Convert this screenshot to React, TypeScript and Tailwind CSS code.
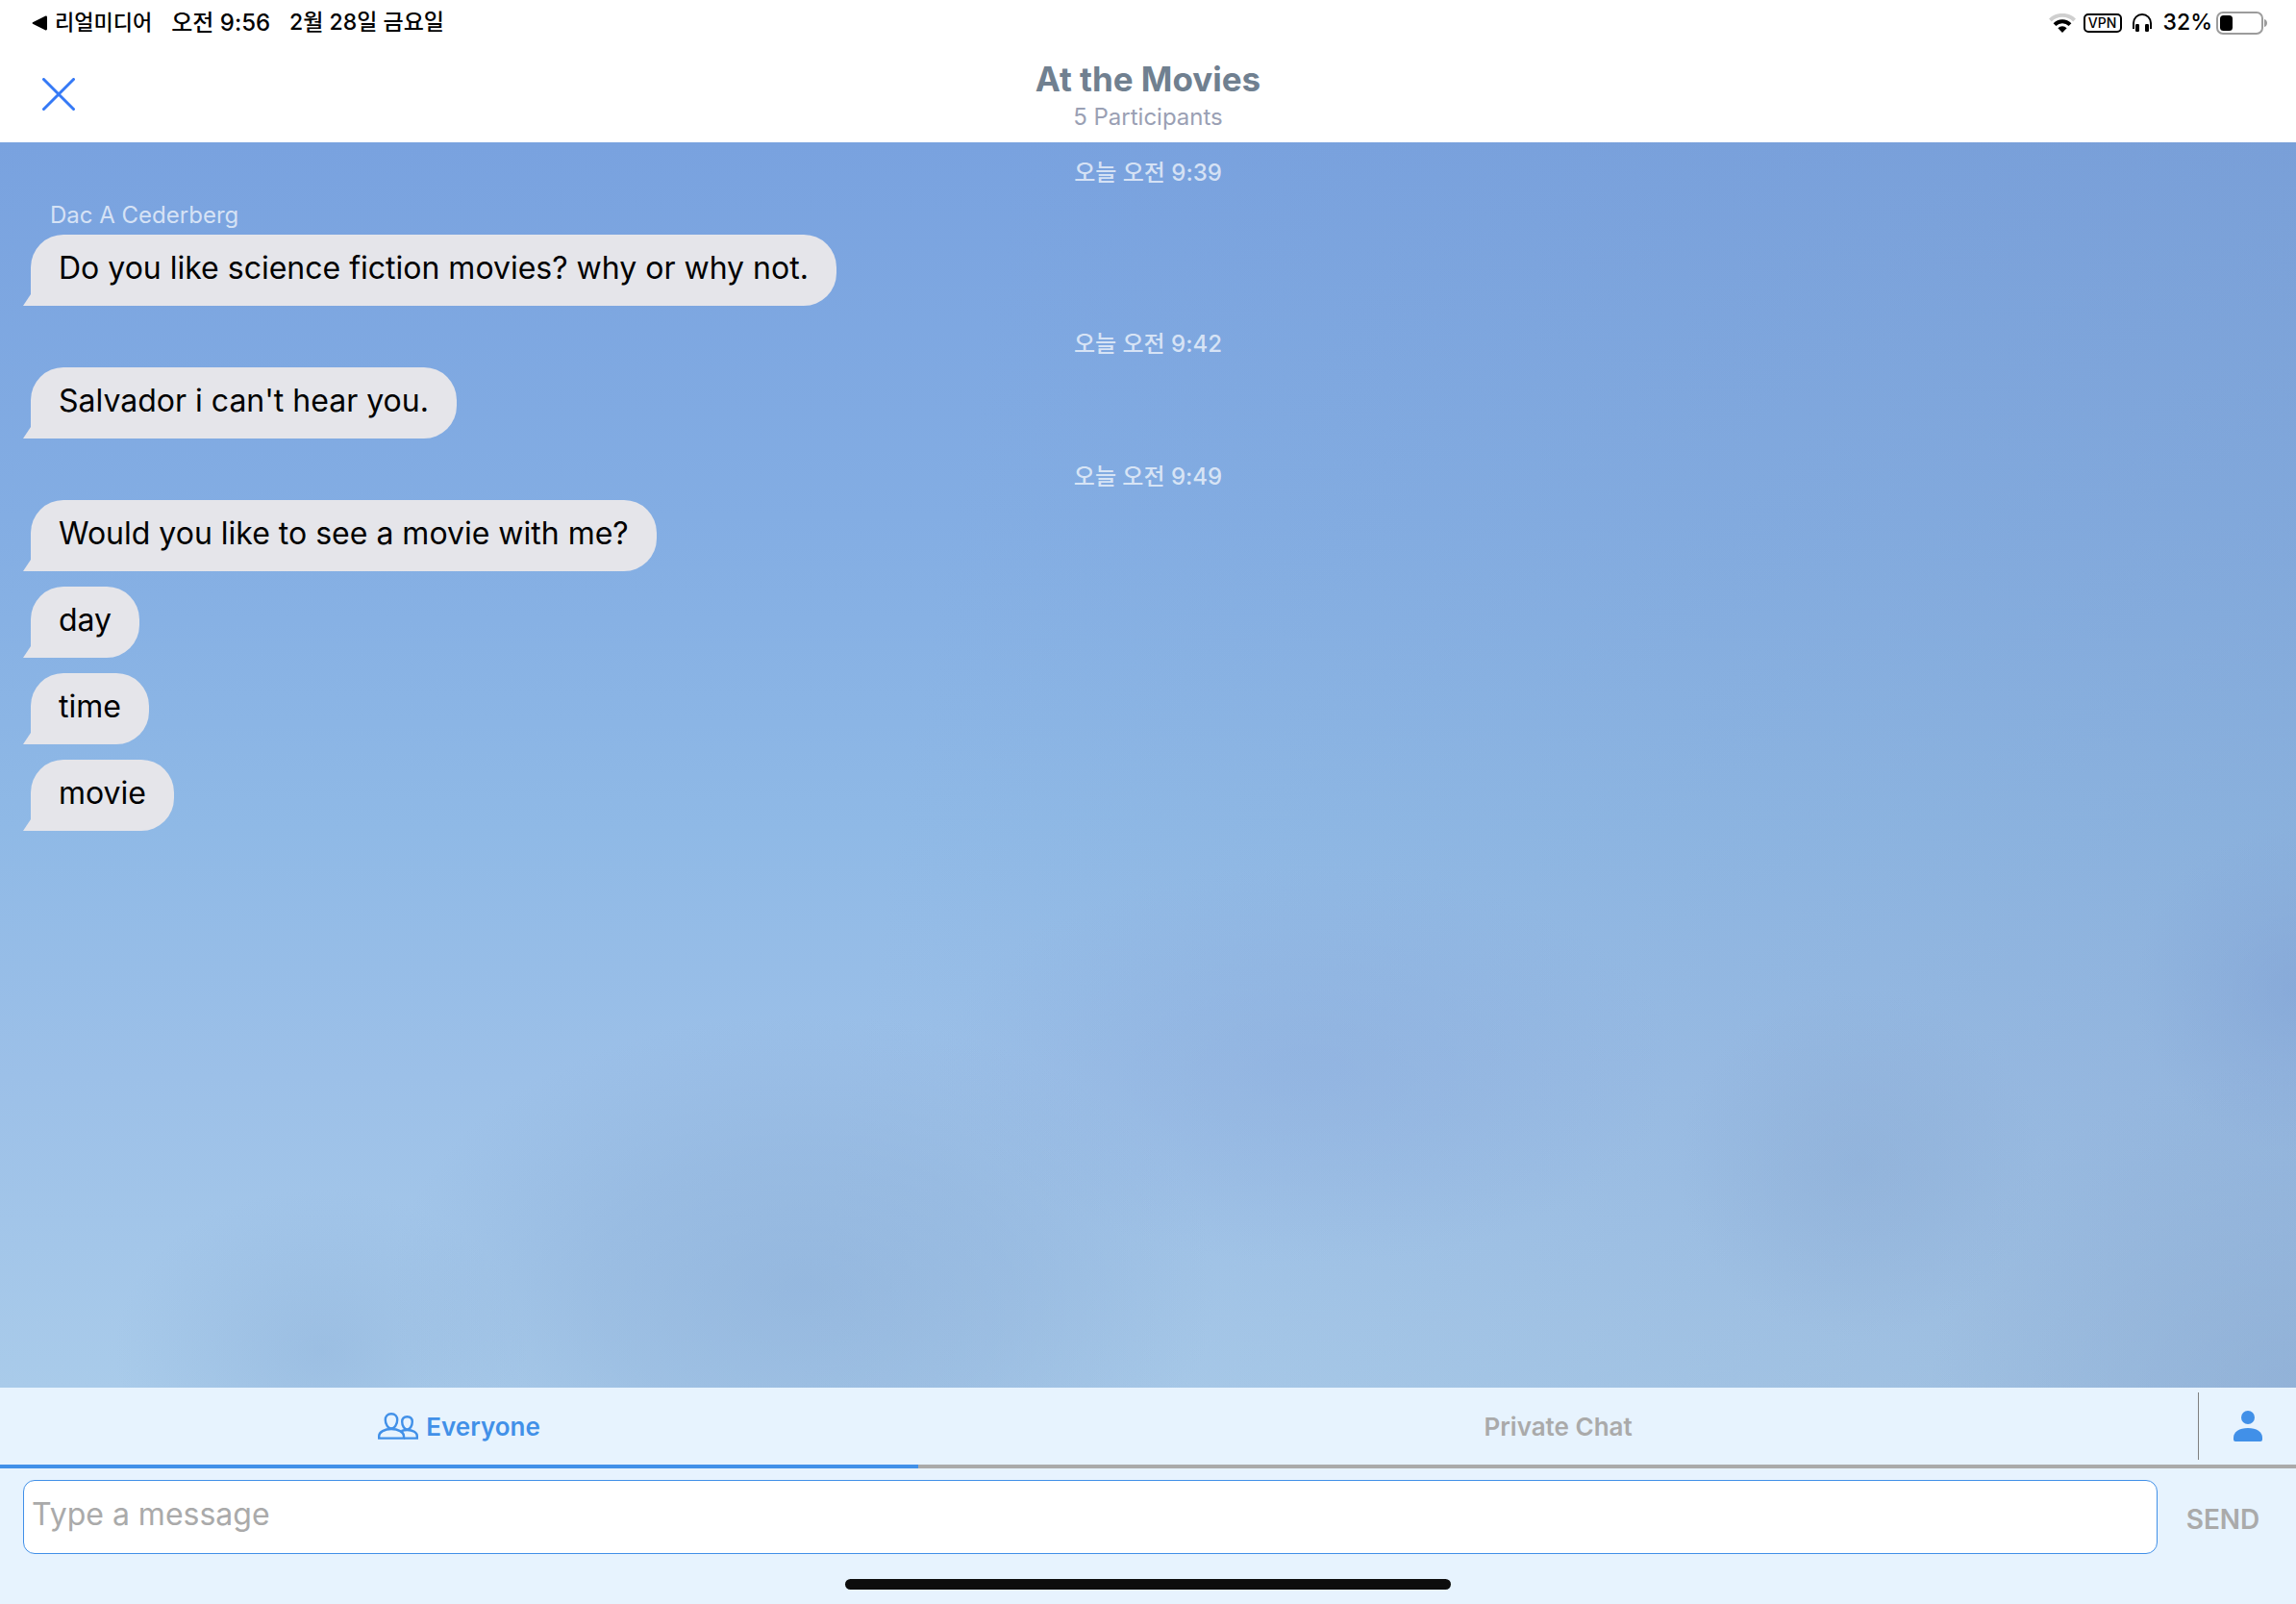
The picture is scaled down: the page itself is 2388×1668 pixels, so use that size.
import clsx from "clsx";

interface Message {
    text: string
    time?: string
    sender?: string
}

const messages: Message[] = [
    { time: "오늘 오전 9:39", sender: "Dac A Cederberg", text: "Do you like science fiction movies? why or why not." },
    { time: "오늘 오전 9:42", text: "Salvador i can't hear you." },
    { time: "오늘 오전 9:49", text: "Would you like to see a movie with me?" },
    { text: "day" },
    { text: "time" },
    { text: "movie" },
]

function WifiIcon() {
    return (
        <svg width="28" height="20" viewBox="0 0 28 20" aria-hidden="true">
            <path d="M0 5.600a20 20 0 0 1 28 0l-2.800 2.800a16 16 0 0 0-22.400 0z" fill="#cfcfcf" />
            <path d="M4.600 10.200a13.400 13.400 0 0 1 18.800 0L20.600 13a9.400 9.400 0 0 0-13.200 0z" fill="#000" />
            <path d="M14 20l-4.600-4.800a6.600 6.600 0 0 1 9.200 0z" fill="#000" />
        </svg>
    )
}

function HeadphonesIcon() {
    return (
        <svg width="20" height="20" viewBox="0 0 20 20" fill="none" aria-hidden="true">
            <path d="M1 16V10a9 9 0 0 1 18 0v6" stroke="#000" strokeWidth="2" />
            <rect x="3" y="11" width="4" height="8" rx="1.200" fill="#000" />
            <rect x="13" y="11" width="4" height="8" rx="1.200" fill="#000" />
        </svg>
    )
}

function BatteryIcon() {
    return (
        <svg width="54" height="24" viewBox="0 0 54 24" fill="none" aria-hidden="true">
            <rect x="1" y="1" width="47" height="22" rx="6" stroke="#9c9c9c" strokeWidth="2" />
            <rect x="4" y="4" width="13" height="16" rx="3.500" fill="#000" />
            <path d="M50 8c4 1 4 7 0 8z" fill="#9c9c9c" />
        </svg>
    )
}

function PeopleIcon() {
    return (
        <svg width="42" height="28" viewBox="0 0 42 28" fill="none" stroke="#4190e8" strokeWidth="2.400" aria-hidden="true">
            <path d="M14 1.200c4 0 6.200 2.800 6.200 6.300 0 4.500-2.700 9-6.200 9s-6.200-4.500-6.200-9c0-3.500 2.200-6.300 6.200-6.300z" />
            <path d="M1.200 26.600v-2.400c0-4 5.800-7.200 12.800-7.200s13 3.200 13 7.200v2.400z" />
            <path d="M30.500 4.200c3.500 0 5.300 2.300 5.300 5.300 0 4-2.300 8-5.300 8s-5.300-4-5.300-8c0-3 1.800-5.300 5.300-5.300z" />
            <path d="M24.500 19.200c1.800-.8 3.800-1.200 6-1.200 5.800 0 10.300 2.800 10.300 6.200v2.400H27" />
        </svg>
    )
}

function StatusBar() {
    return (
        <div className="flex h-12 items-center justify-between pr-[29px] pb-px pl-[33px] text-[23px] font-medium text-black">
            <div className="flex items-center gap-5 text-[24px]">
                <a href="#back" className="flex items-center gap-2 text-[22px]">
                    <svg width="16" height="16" viewBox="0 0 16 16" aria-hidden="true">
                        <path d="M1 7.200 14 .7q2-.7 2 1.300v12q0 2-2 1.300L1 8.800q-1-.8 0-1.600z" />
                    </svg>
                    리얼미디어
                </a>
                <span>오전 9:56</span>
                <span className="text-[23px]">2월 28일 금요일</span>
            </div>
            <div className="flex items-center">
                <WifiIcon />
                <span className="ml-2 flex h-5 w-10 items-center justify-center rounded-[5px] border-2 border-black text-[14px]">VPN</span>
                <span className="ml-[11px]"><HeadphonesIcon /></span>
                <span className="mr-1 ml-3">32%</span>
                <BatteryIcon />
            </div>
        </div>
    )
}

function Header() {
    return (
        <header className="grid h-[100px] grid-cols-[1fr_auto_1fr] items-center">
            <button aria-label="Close" className="ml-[44px] w-fit">
                <svg width="34" height="34" viewBox="0 0 34 34" stroke="#3579f6" strokeWidth="3" strokeLinecap="round">
                    <path d="M1.500 1.500l31 31M32.500 1.500l-31 31" />
                </svg>
            </button>
            <div className="pt-1 text-center">
                <h1 className="text-[35px] leading-[44px] font-bold text-[#708090]">At the Movies</h1>
                <p className="text-[24px] leading-9 text-[#9aa0b4]">5 Participants</p>
            </div>
        </header>
    )
}

function Bubble({ text }: { text: string }) {
    return (
        <div className="flex items-end">
            <svg width="8" height="12" viewBox="0 0 8 12" fill="#e5e5ea" aria-hidden="true">
                <path d="M8 0v12H0z" />
            </svg>
            <p className="rounded-[34px] rounded-bl-none bg-[#e5e5ea] px-[29px] pt-[13px] pb-[17px] text-[32px] leading-[44px] text-black">
                {text}
            </p>
        </div>
    )
}

function MessageList() {
    return (
        <main className="flex-1 bg-[radial-gradient(ellipse_16%_16%_at_57%_74%,#86a6da55,#86a6da33_45%,transparent),radial-gradient(ellipse_8%_14%_at_81%_82%,#86a6d055,#86a6d033_45%,transparent),radial-gradient(ellipse_7%_13%_at_100%_68%,#7c9cd266,#7c9cd233_45%,transparent),radial-gradient(ellipse_18%_22%_at_35%_92%,#88abd688,#88abd655_50%,transparent),radial-gradient(ellipse_9%_13%_at_14%_97%,#8aaed866,#8aaed833_50%,transparent),radial-gradient(ellipse_16%_26%_at_100%_100%,#86a6d077,transparent),linear-gradient(100deg,transparent_40%,#7a96c044),linear-gradient(#79a2df,#83ade3_30%,#8fb9e6_55%,#9cc0e8_75%,#a9cbea)] pl-6">
            <ul>
                {messages.map((message, index) => (
                    <li key={index} className={clsx("flex flex-col items-start", !message.time && "mt-4")}>
                        {message.time && (
                            <time
                                className={clsx(
                                    "-ml-6 flex h-16 items-center justify-center self-stretch text-[24px] font-medium text-white/70",
                                    index > 0 && "pt-4"
                                )}
                            >
                                {message.time}
                            </time>
                        )}
                        {message.sender && (
                            <span className="ml-7 h-8 text-[24px] leading-6 text-white/70">{message.sender}</span>
                        )}
                        <Bubble text={message.text} />
                    </li>
                ))}
            </ul>
        </main>
    )
}

function Tabs() {
    return (
        <nav className="flex h-[84px] text-[26px] font-semibold">
            <button className="flex w-2/5 items-center justify-center gap-2 border-b-4 border-[#4190e8] text-[#4190e8]">
                <PeopleIcon />
                Everyone
            </button>
            <div className="flex flex-1 items-center border-b-4 border-[#aaaaaa]">
                <button className="flex-1 self-stretch text-[#aaaaaa]">Private Chat</button>
                <button aria-label="Participants" className="flex h-[70px] w-[102px] items-center justify-center border-l border-[#808080]">
                    <svg width="30" height="32" viewBox="0 0 30 32" fill="#4190e8">
                        <circle cx="15" cy="7" r="7" />
                        <path d="M0 28c0-6 6-10 15-10s15 4 15 10v2q0 2-2 2H2q-2 0-2-2z" />
                    </svg>
                </button>
            </div>
        </nav>
    )
}

export default function App() {
    return (
        <div className="flex min-h-screen flex-col bg-white font-['Inter','Noto_Sans_CJK_KR',sans-serif]">
            <StatusBar />
            <Header />
            <MessageList />
            <footer className="bg-[#e7f3fe]">
                <Tabs />
                <form className="flex items-center pt-3 pl-6">
                    <input
                        type="text"
                        aria-label="Message"
                        placeholder="Type a message"
                        className="h-[77px] min-w-0 flex-1 rounded-xl border border-[#4190e8] bg-white px-2 pb-1.5 text-[32px] text-black placeholder:text-[#aaaaaa]"
                    />
                    <button type="button" className="w-[144px] pt-1 pr-2 text-[28px] font-semibold text-[#aaaaaa]">SEND</button>
                </form>
                <div className="mx-auto mt-[26px] mb-[15px] h-[11px] w-[630px] max-w-full rounded-full bg-[#0d0d0d]" />
            </footer>
        </div>
    )
}
